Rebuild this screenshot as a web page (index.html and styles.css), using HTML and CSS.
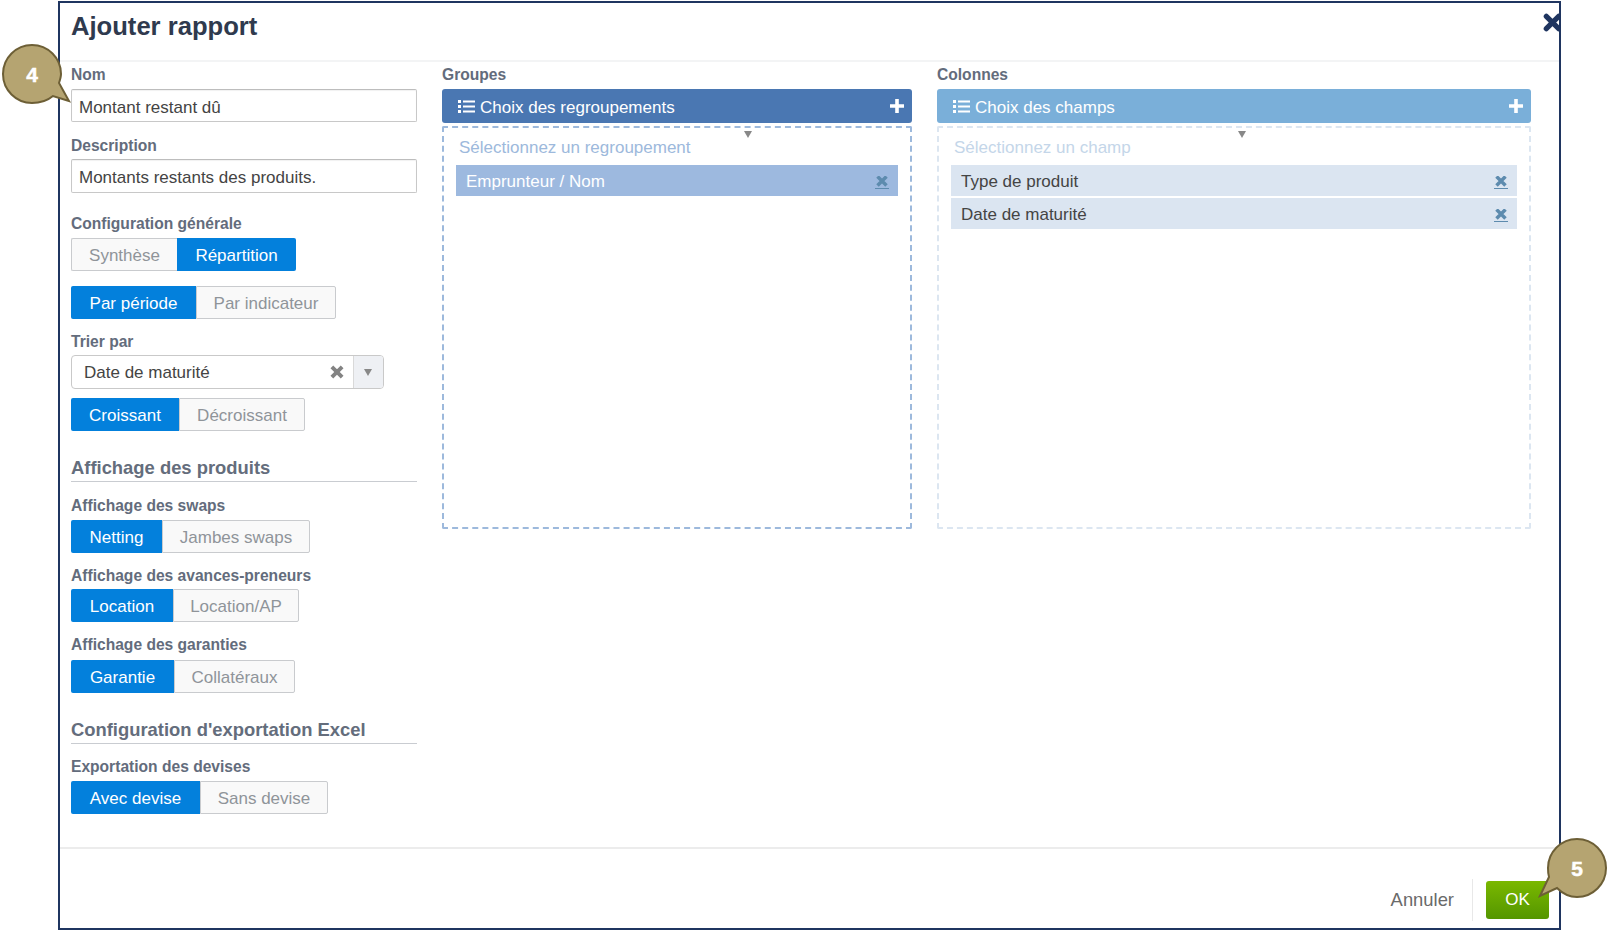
FILE: index.html
```html
<!DOCTYPE html>
<html lang="fr">
<head>
<meta charset="utf-8">
<title>Ajouter rapport</title>
<link rel="stylesheet" href="styles.css">
</head>
<body>
<div class="modal">
  <header class="modal-head">
    <h1>Ajouter rapport</h1>
    <svg class="close" viewBox="0 0 20 20"><path d="M3.5 3.5 16.5 16.5M16.5 3.5 3.5 16.5"/></svg>
  </header>
  <main class="modal-body">
    <section class="col-left">
      <label class="lbl">Nom</label>
      <div class="input">Montant restant dû</div>
      <label class="lbl lbl-desc">Description</label>
      <div class="input input-tall">Montants restants des produits.</div>
      <label class="lbl lbl-conf">Configuration générale</label>
      <div class="seg">
        <span class="off w-syn">Synthèse</span><span class="on w-rep">Répartition</span>
      </div>
      <div class="seg seg-second">
        <span class="on w-per">Par période</span><span class="off w-ind">Par indicateur</span>
      </div>
      <label class="lbl lbl-trier">Trier par</label>
      <div class="select">
        <span class="select-value">Date de maturité</span>
        <svg class="select-x" viewBox="0 0 14 14"><path d="M2.5 2.5 11.5 11.5M11.5 2.5 2.5 11.5"/></svg>
        <span class="select-arrow"><i class="tri"></i></span>
      </div>
      <div class="seg seg-sort">
        <span class="on w-cro">Croissant</span><span class="off w-dec">Décroissant</span>
      </div>
      <h2 class="sec sec-prod">Affichage des produits</h2>
      <label class="lbl lbl-swap">Affichage des swaps</label>
      <div class="seg">
        <span class="on w-net">Netting</span><span class="off w-jam">Jambes swaps</span>
      </div>
      <label class="lbl lbl-avp">Affichage des avances-preneurs</label>
      <div class="seg">
        <span class="on w-loc">Location</span><span class="off w-lap">Location/AP</span>
      </div>
      <label class="lbl lbl-gar">Affichage des garanties</label>
      <div class="seg">
        <span class="on w-gar">Garantie</span><span class="off w-col">Collatéraux</span>
      </div>
      <h2 class="sec sec-xls">Configuration d'exportation Excel</h2>
      <label class="lbl lbl-dev">Exportation des devises</label>
      <div class="seg">
        <span class="on w-avd">Avec devise</span><span class="off w-snd">Sans devise</span>
      </div>
    </section>

    <section class="col col-groups">
      <label class="lbl">Groupes</label>
      <div class="bar">
        <svg class="list" viewBox="0 0 17 13"><path d="M0 0h3v3H0zM0 5h3v3H0zM0 10h3v3H0zM5 .5h12v2H5zM5 5.5h12v2H5zM5 10.5h12v2H5z"/></svg>
        <span class="bar-title">Choix des regroupements</span>
        <svg class="plus" viewBox="0 0 14 14"><path d="M5.2 0h3.6v5.2H14v3.6H8.800V14H5.200V8.800H0V5.200h5.200z"/></svg>
      </div>
      <div class="drop">
        <i class="tri drop-tri"></i>
        <div class="hint">Sélectionnez un regroupement</div>
        <div class="chip">
          <span>Emprunteur / Nom</span>
          <a class="chip-x"><svg viewBox="0 0 14 11"><path d="M2.500 .5 11.500 9.500M11.500 .5 2.500 9.500"/></svg></a>
        </div>
      </div>
    </section>

    <section class="col col-cols">
      <label class="lbl">Colonnes</label>
      <div class="bar">
        <svg class="list" viewBox="0 0 17 13"><path d="M0 0h3v3H0zM0 5h3v3H0zM0 10h3v3H0zM5 .5h12v2H5zM5 5.5h12v2H5zM5 10.5h12v2H5z"/></svg>
        <span class="bar-title">Choix des champs</span>
        <svg class="plus" viewBox="0 0 14 14"><path d="M5.2 0h3.6v5.2H14v3.6H8.800V14H5.200V8.800H0V5.200h5.200z"/></svg>
      </div>
      <div class="drop">
        <i class="tri drop-tri"></i>
        <div class="hint">Sélectionnez un champ</div>
        <div class="chip">
          <span>Type de produit</span>
          <a class="chip-x"><svg viewBox="0 0 14 11"><path d="M2.500 .5 11.500 9.500M11.500 .5 2.500 9.500"/></svg></a>
        </div>
        <div class="chip">
          <span>Date de maturité</span>
          <a class="chip-x"><svg viewBox="0 0 14 11"><path d="M2.500 .5 11.500 9.500M11.500 .5 2.500 9.500"/></svg></a>
        </div>
      </div>
    </section>
  </main>
  <footer class="modal-foot">
    <span class="cancel">Annuler</span>
    <span class="foot-div"></span>
    <button class="ok">OK</button>
  </footer>
</div>

<svg class="callout callout-4" viewBox="0 0 74 74"><path d="M31 2C15 2 2 15 2 31s13 29 29 29c8 0 15-2 21-7l16 5-10-18c1-3 2-6 2-9C60 15 47 2 31 2z"/><text x="31" y="38.500">4</text></svg>
<svg class="callout callout-5" viewBox="0 0 74 74"><path d="M43 2C27 2 14 15 14 31c0 3 0 6 1 9L6 59l17-8c6 6 13 9 20 9 16 0 29-13 29-29S59 2 43 2z"/><text x="43" y="38.500">5</text></svg>
</body>
</html>
```
FILE: styles.css
```css
* { box-sizing: border-box; }
html, body { margin: 0; padding: 0; }
body {
  width: 1608px;
  height: 931px;
  background: #fff;
  overflow: hidden;
  position: relative;
  padding: 1px 47px 0 58px;
  font-family: "Liberation Sans", Arial, sans-serif;
  color: #444;
}
.modal {
  height: 929px;
  border: 2px solid #1f3560;
  display: flex;
  flex-direction: column;
  background: #fff;
  overflow: hidden;
}
.modal-head {
  height: 59px;
  flex: none;
  border-bottom: 2px solid #f3f4f5;
  padding: 7px 0 0 11px;
  position: relative;
}
.modal-head h1 {
  margin: 0;
  font-size: 25.600px;
  line-height: 32px;
  font-weight: 700;
  color: #2f3a4e;
}
.close {
  position: absolute;
  right: -3px;
  top: 10px;
  width: 19px;
  height: 19px;
  overflow: visible;
}
.close path { fill: none; stroke: #1f3560; stroke-width: 5.500; stroke-linecap: round; }

.modal-body {
  flex: 1;
  display: flex;
  align-items: flex-start;
  padding: 5px 0 0 11px;
  border-bottom: 2px solid #ececec;
}
.col-left { width: 346px; flex: none; display: flex; flex-direction: column; align-items: flex-start; }
.col { display: flex; flex-direction: column; }
.col-groups { width: 470px; margin-left: 25px; }
.col-cols { width: 594px; margin-left: 25px; }

.lbl {
  display: block;
  height: 16px;
  line-height: 16px;
  font-size: 15.600px;
  font-weight: 700;
  color: #636c7c;
  margin-bottom: 6px;
}
.lbl-desc { margin-top: 16px; margin-bottom: 5px; }
.lbl-conf { margin-top: 23px; }
.lbl-trier { margin-top: 15px; margin-bottom: 5px; }
.lbl-swap { margin-top: 16px; margin-bottom: 6px; }
.lbl-avp { margin-top: 15px; margin-bottom: 5px; }
.lbl-gar { margin-top: 15px; margin-bottom: 7px; }
.lbl-dev { margin-top: 15px; margin-bottom: 6px; }

.input {
  width: 346px;
  height: 33px;
  border: 1px solid #c8c8c8;
  border-top-color: #bdbdbd;
  border-radius: 2px;
  padding-left: 7px;
  font-size: 17px;
  line-height: 35px;
  color: #444;
  box-shadow: inset 0 1px 1px rgba(0,0,0,.06);
}
.input-tall { height: 34px; line-height: 36px; }

.seg { display: flex; height: 33px; font-size: 17px; line-height: 35px; }
.seg span { display: block; text-align: center; }
.seg .on { background: #0380dc; color: #fff; border-radius: 2px 0 0 2px; }
.seg .off {
  background: #f9f9f9;
  color: #8f9499;
  border: 1px solid #c9cbce;
  border-radius: 0 2px 2px 0;
  line-height: 33px;
}
.seg .off:first-child { border-radius: 2px 0 0 2px; border-right: 0; }
.seg .on:last-child { border-radius: 0 2px 2px 0; }
.seg-second { margin-top: 15px; }
.seg-sort { margin-top: 9px; }
.w-syn { width: 106px; } .w-rep { width: 119px; }
.w-per { width: 125px; } .w-ind { width: 140px; }
.w-cro { width: 108px; } .w-dec { width: 126px; }
.w-net { width: 91px; } .w-jam { width: 148px; }
.w-loc { width: 102px; } .w-lap { width: 126px; }
.w-gar { width: 103px; } .w-col { width: 121px; }
.w-avd { width: 129px; } .w-snd { width: 128px; }

.select {
  display: flex;
  align-items: center;
  width: 313px;
  height: 34px;
  margin: 0;
  border: 1px solid #c9c9c9;
  border-radius: 4px;
  font-size: 17px;
}
.select-value { flex: 1; padding-left: 12px; padding-top: 1px; color: #444; }
.select-x { width: 16px; height: 16px; margin-right: 8px; }
.select-x path { fill: none; stroke: #838383; stroke-width: 3.400; }
.select-arrow {
  width: 30px;
  height: 100%;
  background: #eef0f4;
  border-left: 1px solid #d9d9d9;
  border-radius: 0 3px 3px 0;
  display: flex;
  align-items: center;
  justify-content: center;
  padding-right: 2px;
}
.tri {
  display: block;
  width: 0;
  height: 0;
  border-left: 4px solid transparent;
  border-right: 4px solid transparent;
  border-top: 7px solid #888;
}

.sec {
  width: 346px;
  margin: 0;
  height: 26px;
  line-height: 24px;
  font-size: 18.400px;
  font-weight: 700;
  color: #646d7c;
  border-bottom: 1px solid #c9ccd1;
}
.sec-prod { margin-top: 25px; }
.sec-xls { margin-top: 24px; height: 27px; line-height: 26px; }

.bar {
  height: 34px;
  display: flex;
  align-items: center;
  padding-left: 16px;
  border-radius: 3px;
  color: #fff;
  font-size: 17px;
}
.col-groups .bar { background: #4a77b2; }
.col-cols .bar { background: #7aafd9; }
.list { width: 17px; height: 13px; margin: 1px 5px 0 0; fill: #fff; }
.bar-title { flex: 1; padding-top: 4px; }
.plus { width: 14px; height: 14px; margin-right: 8px; fill: #fff; }

.drop {
  position: relative;
  height: 403px;
  margin: 3px 0 0;
  border: 2px dashed #9db9dc;
  border-radius: 2px;
  padding: 10px 12px 0;
}
.col-cols .drop { border-color: #dce6f1; }
.drop-tri { position: absolute; top: 3px; right: 158px; }
.col-cols .drop-tri { right: 283px; }
.hint {
  height: 27px;
  line-height: 20px;
  padding-left: 3px;
  font-size: 17px;
  color: #9db9dc;
}
.col-cols .hint { color: #c4d6e9; }
.chip {
  height: 31px;
  margin-bottom: 2px;
  display: flex;
  align-items: center;
  justify-content: space-between;
  padding: 2px 9px 0 10px;
  font-size: 17px;
  background: #9db9df;
  color: #fff;
}
.col-cols .chip { background: #dbe5f1; color: #444; }
.chip-x { display: block; width: 14px; height: 14px; border-bottom: 1.500px solid #5d8bae; }
.chip-x svg { display: block; width: 14px; height: 11px; margin-top: 1px; }
.chip-x path { fill: none; stroke: #5d8bae; stroke-width: 3.500; }

.modal-foot {
  display: flex;
  align-items: center;
  justify-content: flex-end;
  padding: 23px 10px 0 0;
  height: 79px;
  flex: none;
}
.cancel { font-size: 18.400px; color: #6a6a6a; }
.foot-div { width: 1px; height: 42px; background: #e8e8e8; margin: 0 13px 0 18px; }
.ok {
  width: 63px;
  height: 38px;
  border: 0;
  border-radius: 3px;
  font: 17px "Liberation Sans", Arial, sans-serif;
  color: #fff;
  background: linear-gradient(#7ab800, #549600);
}

.callout { position: absolute; width: 74px; height: 74px; overflow: visible; }
.callout path { fill: #b5a471; stroke: #6d5f36; stroke-width: 2; }
.callout text { fill: #fff; stroke: #fff; stroke-width: .5; font-size: 21px; font-weight: 700; text-anchor: middle; font-family: "Liberation Sans", Arial, sans-serif; }
.callout-4 { left: 1px; top: 43px; }
.callout-5 { left: 1534px; top: 837px; }
```
